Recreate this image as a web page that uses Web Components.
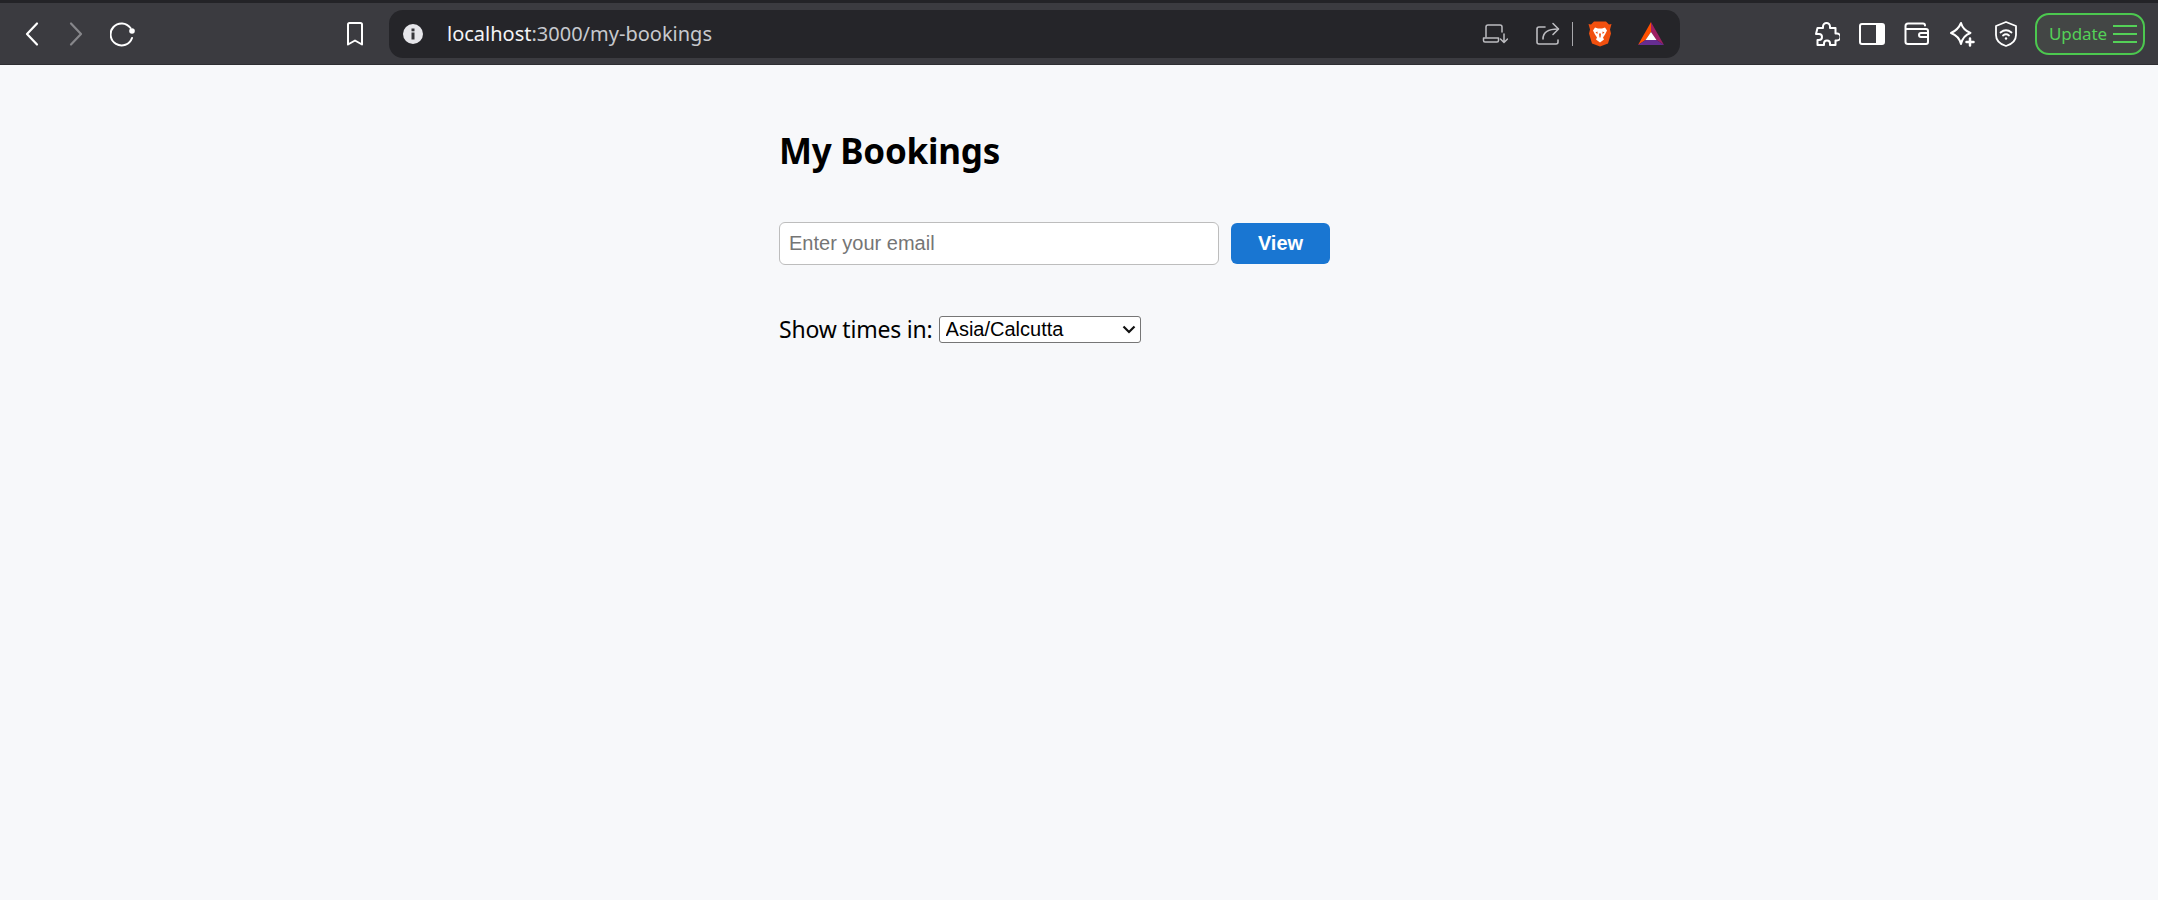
<!DOCTYPE html>
<html>
<head>
<meta charset="utf-8">
<title>My Bookings</title>
<style>
  html, body { margin: 0; height: 100%; background: #f7f8fa; }
  body { display: flex; flex-direction: column; height: 900px; overflow: hidden; font-family: "Noto Sans", "Open Sans", sans-serif; }
</style>
</head>
<body>
<browser-bar url-host="localhost" url-path=":3000/my-bookings"></browser-bar>
<bookings-page></bookings-page>

<script>
class BrowserBar extends HTMLElement {
    constructor() {
        super();
        this._root = this.attachShadow({ mode: 'open' });
        this._root.innerHTML = `
            <style>
            :host {
              display: flex;
              align-items: center;
              box-sizing: border-box;
              height: 65px;
              flex: none;
              background: #3b3b40;
              border-top: 3px solid #232327;
              border-bottom: 1px solid #2e2e32;
              color: #fff;
              font-family: "Noto Sans", "Open Sans", sans-serif;
            }
            svg { display: block; flex: none; fill: none; stroke: currentColor; stroke-linecap: round; stroke-linejoin: round; }
            .nav { display: flex; align-items: center; margin-left: 24px; gap: 24px; }
            .nav .off { color: #87878b; }
            .mark { margin-left: 209px; margin-right: 24px; }
            .omni {
              display: flex;
              align-items: center;
              width: 1291px;
              height: 48px;
              flex: none;
              box-sizing: border-box;
              border-radius: 14px;
              background: #252529;
              padding: 0 15px 0 14px;
            }
            .url { margin-left: 24px; font-size: 20px; color: #c7c9ce; flex: 1; }
            .url b { font-weight: 400; color: #f3f4f6; }
            .omni-icons { display: flex; align-items: center; color: #bcbcc0; }
            .sep { width: 1px; height: 24px; background: #a8a8ac; margin: 0 15px 0 12px; }
            .tools { display: flex; align-items: center; margin-left: 134px; gap: 19px; }
            .update {
              display: flex;
              align-items: center;
              box-sizing: border-box;
              width: 110px;
              height: 42px;
              flex: none;
              margin-left: 17px;
              padding-left: 12px;
              gap: 5px;
              border: 2px solid #4cc84f;
              border-radius: 14px;
              background: #434645;
              color: #54d157;
              font-size: 17px;
              letter-spacing: -0.1px;
            }
            </style>
            <div class="nav">
              <svg width="18" height="26" viewBox="0 0 18 26" stroke-width="2.2"><path d="M13 2.5 3 13l10 10.500"/></svg>
              <svg class="off" width="18" height="26" viewBox="0 0 18 26" stroke-width="2.200"><path d="M5 2.500 15 13 5 23.500"/></svg>
              <svg style="margin-left:2px" width="26" height="26" viewBox="0 0 26 26" stroke-width="2"><path d="M22 17a11 11 0 1 1-1.500-10"/><circle cx="22" cy="10" r="2.800" fill="currentColor" stroke="none"/></svg>
            </div>
            <svg class="mark" width="20" height="26" viewBox="0 0 20 26" stroke-width="2"><path d="M3 3.500Q3 2 4.500 2h11Q17 2 17 3.500v20l-7-4-7 4z"/></svg>
            <div class="omni">
              <svg width="20" height="20" viewBox="0 0 20 20" style="stroke:none"><circle cx="10" cy="10" r="10" fill="#e6e6ea"/><rect x="8.500" y="8.500" width="3" height="7" fill="#36363a"/><rect x="8.500" y="4.500" width="3" height="2.800" fill="#36363a"/></svg>
              <div class="url"><b>${this.getAttribute('url-host')}</b>${this.getAttribute('url-path')}</div>
              <div class="omni-icons">
                <svg width="26" height="22" viewBox="0 0 26 22" stroke-width="1.500"><path d="M4 14V4q0-2 2-2h12q2 0 2 2v5"/><path d="M1.500 15h15v2.500q0 1.500-1.500 1.500H3q-1.500 0-1.500-1.500z"/><path d="M22 11v8m-3.500-3 3.500 3.500 3.500-3.500"/></svg>
                <svg style="margin-left:28px" width="24" height="24" viewBox="0 0 24 24" stroke-width="1.600"><path d="M9 5H3q-2 0-2 2v13q0 2 2 2h17q2 0 2-2v-2"/><path d="M7 17c0-7 5-10 15-10"/><path d="M17 1.500 22.500 7 17 12.500"/></svg>
                <div class="sep"></div>
                <svg width="24" height="27" viewBox="0 0 24 26" style="stroke:none"><path fill="#f1500f" d="M6 1h12l3 3 2.500-.5L22 9l1 4-3 10-8 3-8-3-3-10 1-4L.500 3.500 3 4z"/><path fill="#fff" d="M7 7l3 1h4l3-1 2 3-2 4-2 3 1 2-4 3-4-3 1-2-2-3-2-4z"/><path fill="#f1500f" d="M9.500 11 7.500 12l2 1.500zM14.500 11l2 1-2 1.500zM11 13h2l-.5 4h-1z"/></svg>
                <svg style="margin-left:25px;stroke:none" width="28" height="26" viewBox="0 0 28 26"><path fill="#9e1f63" d="M14 1 27 24 19.500 19 14 11z"/><path fill="#ff5000" d="M14 1 1 24 8.500 19 14 11z"/><path fill="#662d91" d="M1 24H27L19.500 19H8.500z"/><path fill="#fff" d="M14 11l5.500 8H8.500z"/></svg>
              </div>
            </div>
            <div class="tools">
              <svg width="26" height="26" viewBox="0 0 26 26" stroke-width="2"><path d="M9 5.500a3.500 3.500 0 0 1 7 0V7h5.500v5.500H23a3.500 3.500 0 0 1 0 7h-1.500V24H16v-1.500a3 3 0 0 0-6 0V24H3.500v-5H5a3 3 0 0 0 0-6H2l1.500-6H9z"/></svg>
              <svg width="26" height="24" viewBox="0 0 26 24" stroke-width="2"><rect x="1" y="2" width="24" height="20" rx="2"/><path d="M17 2h6q2 0 2 2v16q0 2-2 2h-6z" fill="currentColor" stroke="none"/></svg>
              <svg width="26" height="24" viewBox="0 0 26 24" stroke-width="2"><path d="M21 3.500Q21 1.500 19 1.500H4Q1.500 1.500 1.500 4v16Q1.500 22 4 22h18q2 0 2-2V9q0-2-2-2H3"/><path d="M24 11h-7q-2 0-2 2t2 2h7"/></svg>
              <svg width="26" height="26" viewBox="0 0 26 26" stroke-width="2"><path d="M12 2q2 7 9.500 10-7.500 2.500-9.500 11Q10 15 2 12q7-3 10-10z"/><path d="M21 17.500v7m-3.500-3.500h7" stroke-width="2.500"/></svg>
              <svg width="24" height="28" viewBox="0 0 24 28" stroke-width="1.800"><path d="M12 2 22 6v9c0 6-5 9.500-10 11C7 24.500 2 21 2 15V6z"/><path d="M6.500 12.500q5.500-4.500 11 0M9 15.500q3-2.500 6 0"/><circle cx="12" cy="18.500" r="1.200" fill="currentColor" stroke="none"/></svg>
            </div>
            <div class="update">
              <span>Update</span>
              <svg width="26" height="20" viewBox="0 0 26 20" stroke-width="2" style="stroke-linecap:butt"><path d="M1 2h24M1 10h24M1 18h24"/></svg>
            </div>
        `;
    }
}

class BookingsPage extends HTMLElement {
    constructor() {
        super();
        this._root = this.attachShadow({ mode: 'open' });
        this._root.innerHTML = `
            <style>
            :host {
              display: block;
              width: 600px;
              margin: 0 auto;
              flex: 1;
              color: #000;
              font-family: "Noto Sans", "Open Sans", sans-serif;
              font-size: 23px;
            }
            h1 { margin: 0; padding-top: 62px; font-size: 35px; line-height: 48px; font-weight: 700; letter-spacing: -0.25px; }
            .zone { display: flex; align-items: center; gap: 6px; margin-top: 48px; letter-spacing: -0.2px; }
            </style>
            <h1>My Bookings</h1>
            <email-form></email-form>
            <div class="zone">
              <span>Show times in:</span>
              <zone-select></zone-select>
            </div>
        `;
    }
}

class EmailForm extends HTMLElement {
    constructor() {
        super();
        this._root = this.attachShadow({ mode: 'open' });
        this._root.innerHTML = `
            <style>
            :host { display: flex; align-items: center; gap: 12px; margin-top: 47px; }
            input {
              box-sizing: border-box;
              width: 440px;
              height: 43px;
              margin: 0;
              padding: 0 9px;
              background: #fff;
              border: 1.500px solid #bdbdbd;
              border-radius: 6px;
              font-family: "Liberation Sans", Arial, sans-serif;
              font-size: 20px;
              outline: none;
            }
            input::placeholder { color: #757575; opacity: 1; }
            button {
              box-sizing: border-box;
              width: 99px;
              height: 41px;
              padding: 0;
              border: none;
              border-radius: 6px;
              background: #1976d2;
              color: #fff;
              font-family: "Liberation Sans", Arial, sans-serif;
              font-size: 20px;
              font-weight: 700;
            }
            </style>
            <input type="email" placeholder="Enter your email">
            <button>View</button>
        `;
    }
}

class ZoneSelect extends HTMLElement {
    constructor() {
        super();
        this._root = this.attachShadow({ mode: 'open' });
        this._root.innerHTML = `
            <style>
            :host { display: block; position: relative; }
            select {
              display: block;
              appearance: none;
              box-sizing: border-box;
              width: 202px;
              height: 27px;
              margin: 0;
              padding: 0 0 0 6px;
              background: #fff;
              color: #000;
              border: 1px solid #767676;
              border-radius: 3px;
              font-family: "Liberation Sans", Arial, sans-serif;
              font-size: 20px;
              letter-spacing: 0;
            }
            svg { position: absolute; right: 5px; top: 9px; pointer-events: none; }
            </style>
            <select><option>Asia/Calcutta</option></select>
            <svg width="14" height="9" viewBox="0 0 14 9" fill="none" stroke="#111" stroke-width="2.200"><path d="M1.500 1.500 7 7l5.500-5.500"/></svg>
        `;
    }
}

window.customElements.define('browser-bar', BrowserBar);
window.customElements.define('bookings-page', BookingsPage);
window.customElements.define('email-form', EmailForm);
window.customElements.define('zone-select', ZoneSelect);
</script>
</body>
</html>
